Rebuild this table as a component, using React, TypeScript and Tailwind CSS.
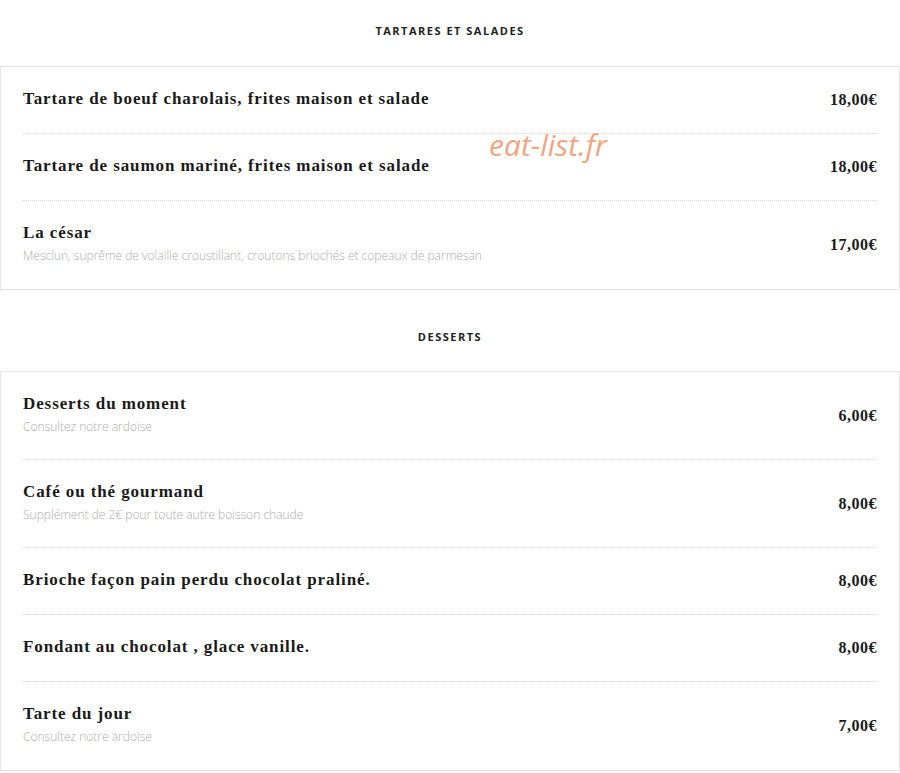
import React from 'react'

type Item = { name: string; desc?: string; price: string }

const sections: { title: string; items: Item[] }[] = [
  {
    title: 'Tartares et salades',
    items: [
      { name: 'Tartare de boeuf charolais, frites maison et salade', price: '18,00€' },
      { name: 'Tartare de saumon mariné, frites maison et salade', price: '18,00€' },
      {
        name: 'La césar',
        desc: 'Mesclun, suprême de volaille croustillant, croutons briochés et copeaux de parmesan',
        price: '17,00€',
      },
    ],
  },
  {
    title: 'Desserts',
    items: [
      { name: 'Desserts du moment', desc: 'Consultez notre ardoise', price: '6,00€' },
      { name: 'Café ou thé gourmand', desc: 'Supplément de 2€ pour toute autre boisson chaude', price: '8,00€' },
      { name: 'Brioche façon pain perdu chocolat praliné.', price: '8,00€' },
      { name: 'Fondant au chocolat , glace vanille.', price: '8,00€' },
      { name: 'Tarte du jour', desc: 'Consultez notre ardoise', price: '7,00€' },
    ],
  },
]

function Row({ item, last }: { item: Item; last: boolean }) {
  return (
    <div
      className={
        'flex items-center justify-between ' + (last ? '' : 'border-b border-dotted border-[#d6d6d6]')
      }
    >
      <div className={last ? 'pt-[20px] pb-[23px]' : 'pt-[20px] pb-[22px]'}>
        <div className="font-['Liberation_Serif',serif] text-[17px] leading-[24px] font-bold tracking-[0.9px] text-[#1a1a1a]">
          {item.name}
        </div>
        {item.desc && (
          <div className="font-['Open_Sans',sans-serif] text-[12px] leading-[21px] font-light text-[#adadad]">
            {item.desc}
          </div>
        )}
      </div>
      <div className="font-['Liberation_Serif',serif] text-[16px] font-bold tracking-[0.5px] text-[#1a1a1a]">
        {item.price}
      </div>
    </div>
  )
}

export default function App() {
  return (
    <div className="relative min-h-[773px] w-[900px] overflow-hidden bg-white">
      {sections.map((section, si) => (
        <div key={section.title}>
          <div
            className={
              si === 0
                ? 'flex h-[66px] items-center justify-center pb-[4px]'
                : 'mt-[13px] flex h-[68px] items-center justify-center'
            }
          >
            <h2 className="font-['Open_Sans',sans-serif] text-[11px] font-bold tracking-[1.5px] text-[#222] uppercase">
              {section.title}
            </h2>
          </div>
          <div className="border border-[#e6e6e6] px-[22px]">
            {section.items.map((item, i) => (
              <Row key={item.name} item={item} last={i === section.items.length - 1} />
            ))}
          </div>
        </div>
      ))}
      <div className="absolute top-[122px] left-[489px] font-['Open_Sans',sans-serif] text-[30px] italic text-[#f2a57f]">
        eat-list.fr
      </div>
    </div>
  )
}
